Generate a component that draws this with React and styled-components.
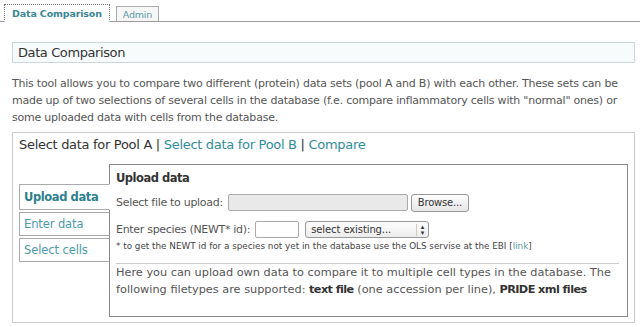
import React, { useState } from "react";
import styled, { createGlobalStyle } from "styled-components";

const GlobalStyle = createGlobalStyle`
  html, body {
    margin: 0;
    padding: 0;
    background: #fff;
  }
  body {
    font-family: "DejaVu Sans", "Liberation Sans", sans-serif;
    color: #444;
  }
`;

const TEAL = "#2f8c99";

const Page = styled.div`
  width: 640px;
  height: 327px;
  overflow: hidden;
`;

const TabBar = styled.div`
  display: flex;
  align-items: flex-end;
  gap: 6px;
  height: 22px;
  padding-left: 4px;
  border-bottom: 1px solid #9a9a9a;
  box-sizing: border-box;
`;

const Tab = styled.div`
  box-sizing: border-box;
  height: ${(p) => (p.active ? 18 : 16)}px;
  margin-bottom: -1px;
  padding: 0 ${(p) => (p.active ? 7 : 6)}px;
  display: flex;
  align-items: center;
  font-size: 9.5px;
  letter-spacing: ${(p) => (p.active ? "-0.15px" : "-0.2px")};
  font-weight: ${(p) => (p.active ? "bold" : "normal")};
  color: ${(p) => (p.active ? "#3a8794" : "#5a9aa6")};
  background: ${(p) => (p.active ? "#fff" : "#f6f6f6")};
  border: 1px ${(p) => (p.active ? "dotted #777" : "solid #aaa")};
  border-bottom: ${(p) => (p.active ? "1px solid #fff" : "1px solid #9a9a9a")};
  cursor: pointer;
`;

const Content = styled.div`
  padding: 20px 5px 0 12px;
`;

const TitleBox = styled.div`
  box-sizing: border-box;
  height: 21px;
  padding-left: 5px;
  display: flex;
  align-items: center;
  border: 1px solid #cdd6d9;
  background: #f7fbfc;
  font-size: 13px;
  letter-spacing: -0.4px;
  color: #333;
`;

const Intro = styled.p`
  margin: 12px 0 0;
  font-size: 11px;
  letter-spacing: -0.22px;
  line-height: 17px;
  color: #555;
`;

const MainBox = styled.div`
  box-sizing: border-box;
  height: 191px;
  margin-top: 6px;
  border: 1px solid #ccc;
  padding: 5px 6px 5px 6px;
  display: flex;
  flex-direction: column;
`;

const Steps = styled.div`
  font-size: 13px;
  letter-spacing: -0.3px;
  color: #333;
  height: 26px;
  line-height: 14px;
`;

const StepLink = styled.a`
  color: ${TEAL};
  text-decoration: none;
`;

const Body = styled.div`
  flex: 1;
  display: flex;
`;

const SideTabs = styled.div`
  width: 90px;
  padding-top: 20px;
  display: flex;
  flex-direction: column;
  gap: 2px;
`;

const SideTab = styled.div`
  box-sizing: border-box;
  height: ${(p) => (p.active ? 26 : 24)}px;
  margin-right: -1px;
  position: relative;
  z-index: ${(p) => (p.active ? 1 : 0)};
  padding-left: 4px;
  display: flex;
  align-items: center;
  font-size: 11.5px;
  letter-spacing: ${(p) => (p.active ? "-0.4px" : "-0.1px")};
  font-weight: ${(p) => (p.active ? "bold" : "normal")};
  color: ${(p) => (p.active ? "#2e7f8c" : "#4a9aa6")};
  background: #fff;
  border: 1px solid #aaa;
  border-right: ${(p) => (p.active ? "1px solid #fff" : "1px solid #888")};
  cursor: pointer;
`;

const Panel = styled.div`
  flex: 1;
  box-sizing: border-box;
  border: 1px solid #888;
  padding: 6px 8px 0 6px;
`;

const PanelTitle = styled.div`
  font-size: 11.5px;
  letter-spacing: -0.5px;
  font-weight: bold;
  color: #333;
  height: 19px;
  line-height: 14px;
`;

const Row = styled.div`
  display: flex;
  align-items: center;
  height: 17px;
  margin-top: ${(p) => p.gap || 0}px;
  font-size: 11px;
  letter-spacing: -0.3px;
  color: #555;
`;

const Label = styled.span`
  margin-right: 5px;
`;

const TextBox = styled.div`
  box-sizing: border-box;
  width: ${(p) => p.w}px;
  height: 17px;
  border: 1px solid #aaa;
  border-radius: 2px;
  background: ${(p) => (p.disabled ? "#e9e9e9" : "#fff")};
`;

const Button = styled.div`
  box-sizing: border-box;
  height: 18px;
  margin-left: 3px;
  padding: 0 6px;
  display: flex;
  align-items: center;
  font-size: 10px;
  letter-spacing: -0.2px;
  color: #333;
  border: 1px solid #999;
  border-radius: 3px;
  background: linear-gradient(#fdfdfd, #e6e6e6);
`;

const Select = styled.div`
  box-sizing: border-box;
  width: 124px;
  height: 17px;
  margin-left: 6px;
  padding: 0 4px 0 5px;
  display: flex;
  align-items: center;
  justify-content: space-between;
  font-size: 10px;
  letter-spacing: -0.1px;
  color: #333;
  border: 1px solid #999;
  border-radius: 3px;
  background: linear-gradient(#fdfdfd, #ececec);
`;

const Arrows = styled.span`
  border-left: 1px solid #ccc;
  padding-left: 4px;
  font-size: 7px;
  line-height: 6px;
  display: flex;
  flex-direction: column;
`;

const Note = styled.div`
  font-size: 8.8px;
  color: #444;
  margin-top: 3px;
  line-height: 10px;
`;

const NoteLink = styled.a`
  color: #5a9aa6;
  text-decoration: none;
`;

const Rule = styled.hr`
  margin: 12px 0 0;
  border: 0;
  border-top: 1px solid #ccc;
`;

const Desc = styled.p`
  margin: 0;
  font-size: 11.3px;
  line-height: 17px;
  color: #555;

  b {
    color: #333;
    letter-spacing: -0.6px;
  }
`;

const sideItems = ["Upload data", "Enter data", "Select cells"];

export default function App() {
  const [tab, setTab] = useState(0);
  const [side, setSide] = useState(0);

  return (
    <Page>
      <GlobalStyle />
      <TabBar>
        <Tab active={tab === 0} onClick={() => setTab(0)}>
          Data Comparison
        </Tab>
        <Tab active={tab === 1} onClick={() => setTab(1)}>
          Admin
        </Tab>
      </TabBar>
      <Content>
        <TitleBox>Data Comparison</TitleBox>
        <Intro>
          This tool allows you to compare two different (protein) data sets
          (pool A and B) with each other. These sets can be made up of two
          selections of several cells in the database (f.e. compare
          inflammatory cells with "normal" ones) or some uploaded data with
          cells from the database.
        </Intro>
        <MainBox>
          <Steps>
            Select data for Pool A | <StepLink href="#">Select data for Pool B</StepLink> |{" "}
            <StepLink href="#">Compare</StepLink>
          </Steps>
          <Body>
            <SideTabs>
              {sideItems.map((item, i) => (
                <SideTab key={item} active={side === i} onClick={() => setSide(i)}>
                  {item}
                </SideTab>
              ))}
            </SideTabs>
            <Panel>
              <PanelTitle>Upload data</PanelTitle>
              <Row gap={4}>
                <Label>Select file to upload:</Label>
                <TextBox w={180} disabled />
                <Button>Browse...</Button>
              </Row>
              <Row gap={10}>
                <Label>Enter species (NEWT* id):</Label>
                <TextBox w={44} />
                <Select>
                  select existing...
                  <Arrows>
                    <span>▴</span>
                    <span>▾</span>
                  </Arrows>
                </Select>
              </Row>
              <Note>
                * to get the NEWT id for a species not yet in the database use
                the OLS servise at the EBI [<NoteLink href="#">link</NoteLink>]
              </Note>
              <Rule />
              <Desc>
                Here you can upload own data to compare it to multiple cell
                types in the database. The following filetypes are supported:{" "}
                <b>text file</b> (one accession per line), <b>PRIDE xml files</b>
              </Desc>
            </Panel>
          </Body>
        </MainBox>
      </Content>
    </Page>
  );
}
